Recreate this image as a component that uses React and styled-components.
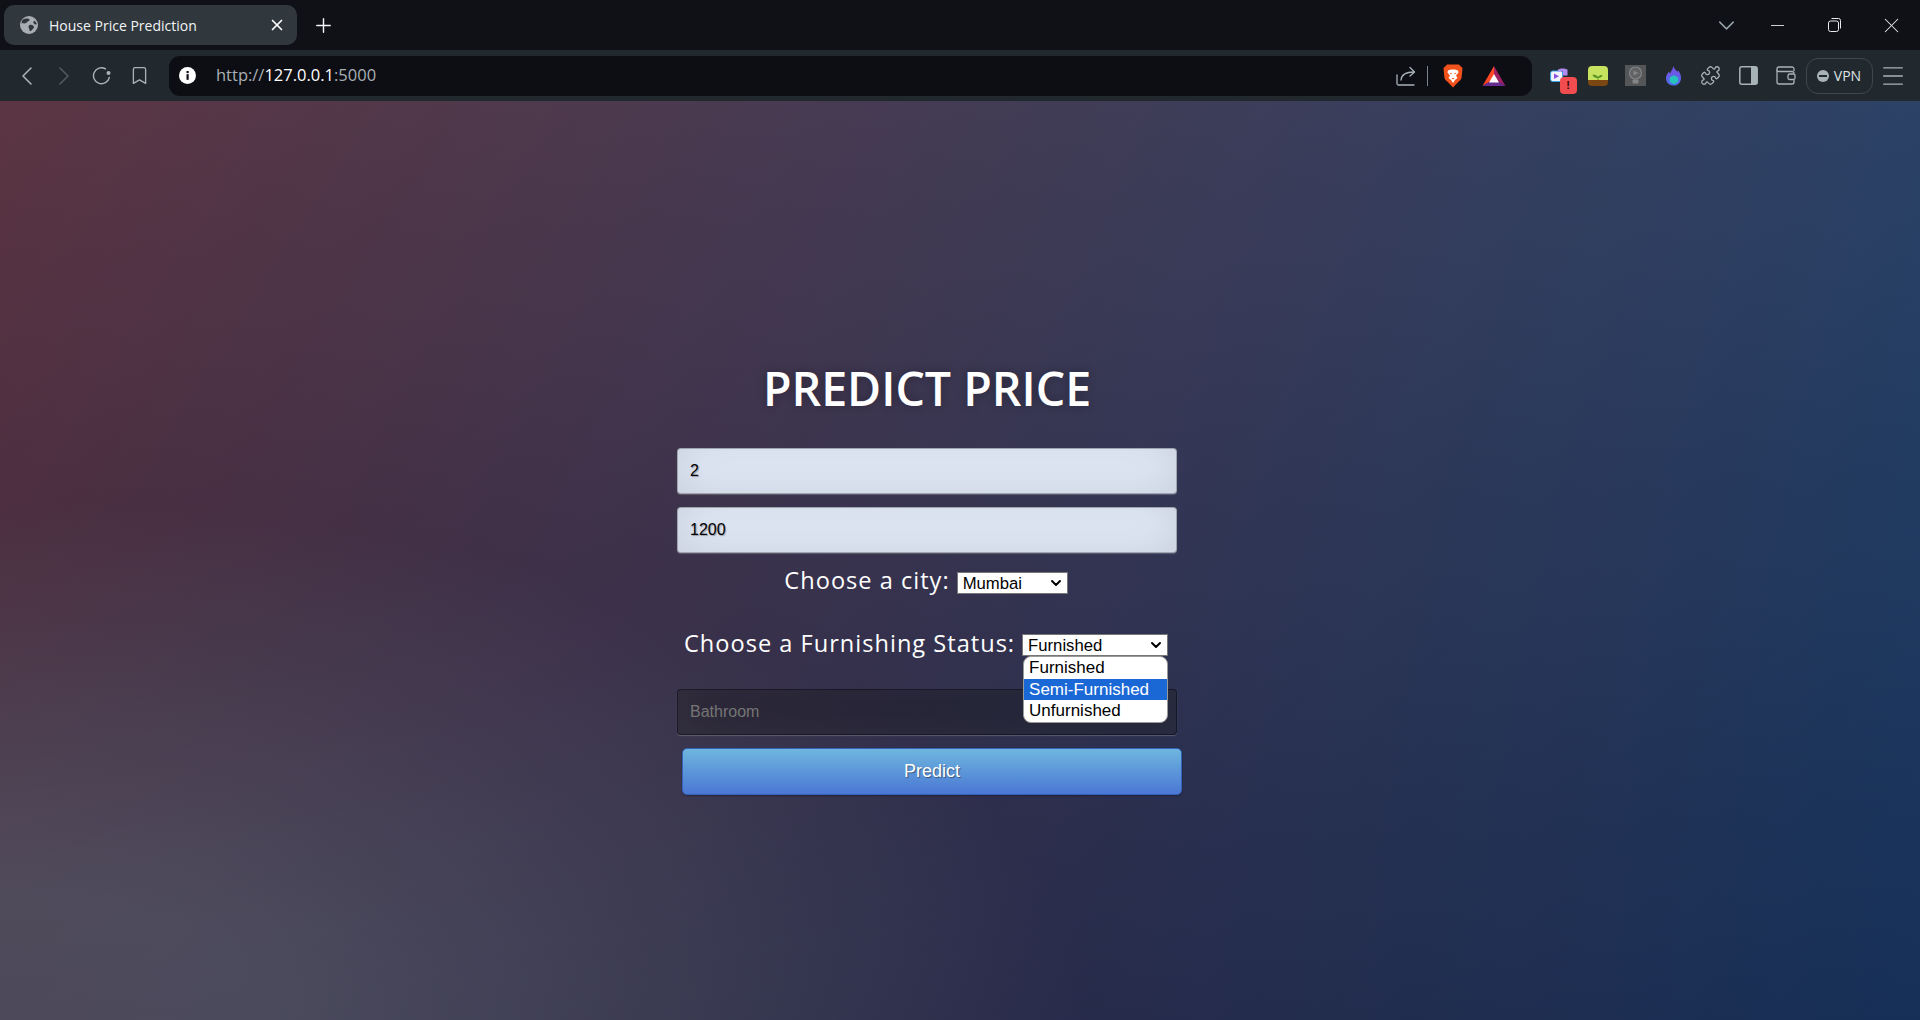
import React from 'react';
import styled, { createGlobalStyle } from 'styled-components';
import { ChevronLeft, ChevronRight, ChevronDown, Bookmark, Plus, X, Minus, Puzzle, Menu } from 'lucide-react';

const Global = createGlobalStyle`
  html, body { margin: 0; height: 100%; }
  #root { height: 100%; }
  * { box-sizing: border-box; }
`;

const Shell = styled.div`
  display: flex;
  flex-direction: column;
  height: 1020px;
  overflow: hidden;
  font-family: "Open Sans", sans-serif;
`;

const TabStrip = styled.div`
  height: 50px;
  flex: none;
  display: flex;
  align-items: flex-start;
  padding: 5px 0 0 4px;
  background: #0f1116;
  color: #fff;
`;

const Tab = styled.div`
  width: 293px;
  height: 40px;
  flex: none;
  display: flex;
  align-items: center;
  padding: 0 11px 0 16px;
  border-radius: 10px;
  background: #30383e;
  font-size: 14px;
`;

const TabTitle = styled.span`
  flex: 1;
  margin-left: 11px;
  color: #f2f4f5;
  white-space: nowrap;
`;

const NewTab = styled.div`
  width: 32px;
  height: 40px;
  margin-left: 10px;
  display: flex;
  align-items: center;
  justify-content: center;
`;

const WindowControls = styled.div`
  margin-left: auto;
  height: 40px;
  display: flex;
  align-items: center;
`;

const WindowButton = styled.div`
  width: ${p => p.$w || 57}px;
  display: flex;
  justify-content: center;
  color: ${p => p.$dim ? '#98a3ab' : '#e8eaec'};
`;

const Toolbar = styled.div`
  height: 51px;
  flex: none;
  display: flex;
  align-items: center;
  padding: 0 9px 0 8px;
  background: #22292e;
`;

const ToolButton = styled.div`
  width: ${p => p.$w || 37.5}px;
  height: 36px;
  flex: none;
  display: flex;
  align-items: center;
  justify-content: center;
  position: relative;
  color: ${p => p.$off ? '#525a60' : '#a8b2b9'};
`;

const AddressBar = styled.div`
  width: 1363px;
  height: 40px;
  flex: none;
  margin: 0 10px 0 11px;
  display: flex;
  align-items: center;
  padding: 0 7px 0 10px;
  border-radius: 11px;
  background: #0d0e13;
`;

const Url = styled.div`
  margin: -2px 0 0 20px;
  font-size: 16.5px;
  color: #a9b0b6;
  b { font-weight: 400; color: #fff; }
`;

const AddressIcons = styled.div`
  margin-left: auto;
  display: flex;
  align-items: center;
  color: #a8b2b9;
`;

const Divider = styled.div`
  width: 1px;
  height: 20px;
  margin: 0 15px 0 11px;
  background: #7a848b;
`;

const VpnPill = styled.div`
  width: 67px;
  height: 36px;
  flex: none;
  margin: 0 2px 0 1px;
  display: flex;
  align-items: center;
  justify-content: center;
  gap: 5px;
  border: 1px solid #3e474d;
  border-radius: 12px;
  color: #dfe3e6;
  font-size: 14px;
`;

const VpnDot = styled.span`
  width: 12px;
  height: 12px;
  border-radius: 50%;
  background: #a8b2b9;
  display: flex;
  align-items: center;
  justify-content: center;
  &::after { content: ''; width: 8px; height: 2px; background: #22292e; }
`;

const Badge = styled.span`
  position: absolute;
  right: 3px;
  bottom: 0;
  width: 17px;
  height: 17px;
  border-radius: 4px;
  background: #f14c50;
  color: #30090a;
  font: 700 11px/17px "Liberation Sans", sans-serif;
  text-align: center;
`;

const Page = styled.main`
  flex: 1;
  padding: 258px 0 0 677px;
  background:
    radial-gradient(ellipse farthest-corner at 0% 100%, rgba(104,128,138,.4) 10%, rgba(138,114,76,0) 40%),
    linear-gradient(to bottom, rgba(57,173,219,.25) 0%, rgba(42,60,87,.4) 100%),
    linear-gradient(135deg, #670d10 0%, #092756 100%);
`;

const Form = styled.form`
  width: 500px;
  display: flex;
  flex-direction: column;
  align-items: stretch;
`;

const Title = styled.h1`
  margin: 0 0 31px;
  color: #fff;
  font-size: 46.5px;
  line-height: 58px;
  font-weight: 600;
  text-align: center;
  text-shadow: 0 0 10px rgba(0,0,0,.3);
`;

const Field = styled.input`
  width: 500px;
  height: 46px;
  margin-bottom: ${p => p.$mb || 13}px;
  padding: 10px 12px;
  border: 1px solid rgba(0,0,0,.3);
  border-radius: 4px;
  outline: none;
  background: ${p => p.$filled ? '#e4ecfb' : 'rgba(0,0,0,.3)'};
  box-shadow: inset 0 -5px 45px rgba(100,100,100,.2), 0 1px 1px rgba(255,255,255,.2);
  color: #000;
  font: 16px "Liberation Sans", Arial, sans-serif;
  text-shadow: 1px 1px 1px rgba(0,0,0,.3);
  &::placeholder { color: #757575; text-shadow: none; }
`;

const ChoiceRow = styled.div`
  height: ${p => p.$h}px;
  padding-right: 2px;
  display: flex;
  justify-content: center;
  align-items: flex-start;
  gap: 7px;
  color: #fff;
  font-size: 23.6px;
  line-height: 28px;
  letter-spacing: 1px;
`;

const Picker = styled.div`
  position: relative;
  width: ${p => p.$w}px;
  margin-top: ${p => p.$top || 6}px;
`;

const NativeSelect = styled.select`
  display: block;
  width: 100%;
  height: 22px;
  padding: 0 0 0 5px;
  appearance: none;
  border: 1px solid #767676;
  border-radius: 0;
  background: #fff;
  color: #000;
  font: 16.7px "Liberation Sans", Arial, sans-serif;
`;

const SelectArrow = styled.span`
  position: absolute;
  top: 3px;
  right: 4px;
  display: flex;
  color: #000;
  pointer-events: none;
`;

const OptionList = styled.ul`
  position: absolute;
  top: 22px;
  left: 1px;
  right: 0;
  margin: 0;
  padding: 0;
  list-style: none;
  overflow: hidden;
  background: #fff;
  border: 1px solid #9a9a9a;
  border-radius: 8px;
  color: #000;
  font: 17px/21.5px "Liberation Sans", Arial, sans-serif;
  letter-spacing: 0;
`;

const OptionItem = styled.li`
  padding: 0 5px;
  background: ${p => p.$active ? '#1a68d6' : 'transparent'};
  color: ${p => p.$active ? '#fff' : '#000'};
`;

const PredictButton = styled.button`
  width: 500px;
  height: 47px;
  margin-left: 5px;
  border: 1px solid #3762bc;
  border-radius: 5px;
  background: linear-gradient(to bottom, #6eb6de, #4a77d4);
  box-shadow: 0 1px 2px rgba(0,0,0,.3);
  color: #fff;
  font: 18px "Liberation Sans", Arial, sans-serif;
  text-shadow: 1px 1px 1px rgba(0,0,0,.4);
`;

const Globe = () => (
  <svg width="18" height="18" viewBox="0 0 18 18">
    <circle cx="9" cy="9" r="9" fill="#a7adb2" />
    <path d="M3 3.500c2-1 4-1.200 6-.5 1 .8.500 2-.8 2.300C7 5.700 7 7 5.500 7.300 4 7.600 2.500 7 1.500 7.500 1.500 6 2 4.500 3 3.500zM9.500 9c1.500-.5 3 0 4 1 1 .8.500 2-.5 2.800-1 1-1.500 2.200-2.800 2.500-1-.5-.7-2-1.200-3-.6-1-.9-2.600.5-3.300zM14 4.500l2 1.800.8 2-2 .3-1.500-1.800z" fill="#30383e" />
  </svg>
);

const InfoDot = () => (
  <svg width="17" height="17" viewBox="0 0 17 17">
    <circle cx="8.500" cy="8.500" r="8.500" fill="#fff" />
    <rect x="7.500" y="7.200" width="2.200" height="5.600" fill="#0d0e13" />
    <rect x="7.500" y="4" width="2.200" height="2.100" fill="#0d0e13" />
  </svg>
);

const ReloadIcon = () => (
  <svg width="20" height="18" viewBox="0 0 20 18" fill="none">
    <path d="M13.500 1.800A8 8 0 1 0 17.300 10.500" stroke="currentColor" strokeWidth="1.400" strokeLinecap="round" />
    <circle cx="16.500" cy="6" r="2" fill="currentColor" />
  </svg>
);

const RestoreIcon = () => (
  <svg width="13" height="14" viewBox="0 0 13 14" fill="none" stroke="currentColor" strokeWidth="1">
    <rect x=".5" y="3" width="10" height="10.500" rx="2" />
    <path d="M3.500 .5h7a2 2 0 0 1 2 2v8" />
  </svg>
);

const ShareIcon = () => (
  <svg width="20" height="20" viewBox="0 0 20 20" fill="none" stroke="currentColor" strokeWidth="1.300" strokeLinecap="round" strokeLinejoin="round">
    <path d="M1 9v8.500c0 1 .6 1.500 1.500 1.500H18" />
    <path d="M5 14c.5-5 4-8 13-8" />
    <path d="M14 1.500 18.500 6 14 10" />
  </svg>
);

const LionIcon = () => (
  <svg width="20" height="24" viewBox="0 0 20 24">
    <path d="M4 .5h12l2 2.300 1.500 1-.8 9.200c-.3 2-1.500 3.500-3 4.600L10 23.500 4.300 17.600c-1.500-1.100-2.700-2.600-3-4.600L.5 3.800 2 2.800z" fill="#f1511b" />
    <path d="M5 6.500 8 5.500h4l3 1 .5 2-2.500 3 1.500 2.500-2.500 2-1.500 2.500h-1L8 16l-2.500-2L7 11.500l-2.500-3z" fill="#fff" />
    <path d="M6.500 8.500 9 9.500l-1 1zM13.500 8.500 11 9.500l1 1zM8.500 14h3L10 15.500z" fill="#f1511b" />
  </svg>
);

const BatIcon = () => (
  <svg width="24" height="22" viewBox="0 0 24 22">
    <path d="M12 1 23.500 21 12 14z" fill="#9e1f63" />
    <path d="M12 1 .5 21 12 14z" fill="#ff4724" />
    <path d="M.5 21h23L12 14z" fill="#662d91" />
    <path d="M12 9 17 17.500H7z" fill="#fff" />
  </svg>
);

const MediaExtension = () => (
  <svg width="18" height="16" viewBox="0 0 18 16" style={{ marginRight: 3 }}>
    <rect x=".6" y="3" width="12" height="10.500" rx="2" fill="#f3f3fb" stroke="#35a6ea" />
    <path d="M4 5.500l5 2.700L4 11z" fill="#8a53e0" />
    <path d="M8 1.500C10 0 15 0 17.500 1.500v6h-4.500V3.500H8z" fill="#b18cf0" />
  </svg>
);

const SproutExtension = () => (
  <svg width="20" height="20" viewBox="0 0 20 20">
    <path d="M4 0h12a4 4 0 0 1 4 4v10H0V4a4 4 0 0 1 4-4z" fill="#c6e25f" />
    <path d="M0 14h20v2a4 4 0 0 1-4 4H4a4 4 0 0 1-4-4z" fill="#7a4712" />
    <path d="M10 14v-3.500M10 11.500C9 9.800 7 9 5 9c0 1.700 2 2.500 5 2.500zM10 11.500c1-1.700 3-2 4-2 0 1.300-2 2-4 2z" stroke="#4f8a1f" strokeWidth=".8" fill="#5d9a23" />
  </svg>
);

const BulbExtension = () => (
  <svg width="21" height="21" viewBox="0 0 21 21">
    <rect width="21" height="21" fill="#545658" />
    <circle cx="10.500" cy="8" r="6" fill="#606264" stroke="#838587" strokeWidth="1.200" />
    <path d="M8.500 5.500 13.500 8l-5 2.500z" fill="#838587" />
    <rect x="7.500" y="14.500" width="6" height="4" rx="1" fill="#838587" />
  </svg>
);

const FlameExtension = () => (
  <svg width="17" height="20" viewBox="0 0 18 24">
    <defs>
      <linearGradient id="flameFill" x1="0" y1="0" x2="0" y2="1">
        <stop offset="0" stopColor="#7a4fe0" />
        <stop offset="1" stopColor="#4f6cf0" />
      </linearGradient>
    </defs>
    <path d="M9 0c1 4 3 5 5 7l.5-2C17 8 18 11 18 14c0 6-4 9.500-9 9.500S0 20 0 14.500c0-3.500 2-5.500 3.500-7.500L5 9C6 6 8 4 9 0z" fill="url(#flameFill)" />
    <path d="M9.500 11l5 2.700v5.600l-5 2.700-5-2.700v-5.600z" fill="#26c3bd" />
  </svg>
);

const SidebarIcon = () => (
  <svg width="19" height="19" viewBox="0 0 19 19">
    <rect x=".8" y=".8" width="17.400" height="17.400" rx="2" fill="none" stroke="#a8b2b9" strokeWidth="1.500" />
    <rect x="12" y="1" width="6" height="17" fill="#a8b2b9" />
  </svg>
);

const WalletIcon = () => (
  <svg width="20" height="19" viewBox="0 0 20 19" fill="none" stroke="#a8b2b9" strokeWidth="1.300">
    <path d="M18 5V3a2 2 0 0 0-2-2H3a2 2 0 0 0-2 2v13a2 2 0 0 0 2 2h13a2 2 0 0 0 2-2v-2" />
    <path d="M1 4c0 1 1 1.500 2 1.500h13a2 2 0 0 1 2 2" />
    <rect x="12" y="8" width="7" height="5.500" rx="1.500" />
  </svg>
);

export default function App() {
  return (
    <Shell>
      <Global />
      <TabStrip>
        <Tab>
          <Globe />
          <TabTitle>House Price Prediction</TabTitle>
          <X size={18} strokeWidth={2.200} color="#fff" />
        </Tab>
        <NewTab><Plus size={23} strokeWidth={1.500} color="#f2f4f5" /></NewTab>
        <WindowControls>
          <WindowButton $w={46} $dim><ChevronDown size={27} strokeWidth={1.300} /></WindowButton>
          <WindowButton><Minus size={21} strokeWidth={1} /></WindowButton>
          <WindowButton><RestoreIcon /></WindowButton>
          <WindowButton><X size={25} strokeWidth={1} /></WindowButton>
        </WindowControls>
      </TabStrip>

      <Toolbar>
        <ToolButton><ChevronLeft size={32} strokeWidth={1.200} /></ToolButton>
        <ToolButton $off><ChevronRight size={32} strokeWidth={1.200} /></ToolButton>
        <ToolButton><ReloadIcon /></ToolButton>
        <ToolButton><Bookmark size={21} strokeWidth={1.500} /></ToolButton>
        <AddressBar>
          <InfoDot />
          <Url>http://<b>127.0.0.1</b>:5000</Url>
          <AddressIcons>
            <ShareIcon />
            <Divider />
            <LionIcon />
            <ToolButton $w={62}><BatIcon /></ToolButton>
          </AddressIcons>
        </AddressBar>
        <ToolButton><MediaExtension /><Badge>!</Badge></ToolButton>
        <ToolButton><SproutExtension /></ToolButton>
        <ToolButton><BulbExtension /></ToolButton>
        <ToolButton><FlameExtension /></ToolButton>
        <ToolButton><Puzzle size={21} strokeWidth={1.500} /></ToolButton>
        <ToolButton><SidebarIcon /></ToolButton>
        <ToolButton><WalletIcon /></ToolButton>
        <VpnPill><VpnDot />VPN</VpnPill>
        <ToolButton><Menu size={28} strokeWidth={1.100} /></ToolButton>
      </Toolbar>

      <Page>
        <Form onSubmit={e => e.preventDefault()}>
          <Title>PREDICT PRICE</Title>
          <Field $filled defaultValue="2" />
          <Field $filled defaultValue="1200" $mb={13} />
          <ChoiceRow $h={63}>
            Choose a city:
            <Picker $w={111}>
              <NativeSelect defaultValue="Mumbai">
                <option>Mumbai</option>
              </NativeSelect>
              <SelectArrow><ChevronDown size={16} strokeWidth={3} /></SelectArrow>
            </Picker>
          </ChoiceRow>
          <ChoiceRow $h={60}>
            Choose a Furnishing Status:
            <Picker $w={146} $top={5}>
              <NativeSelect defaultValue="Furnished">
                <option>Furnished</option>
              </NativeSelect>
              <SelectArrow><ChevronDown size={16} strokeWidth={3} /></SelectArrow>
              <OptionList>
                <OptionItem>Furnished</OptionItem>
                <OptionItem $active>Semi-Furnished</OptionItem>
                <OptionItem>Unfurnished</OptionItem>
              </OptionList>
            </Picker>
          </ChoiceRow>
          <Field placeholder="Bathroom" $mb={13} />
          <PredictButton type="button">Predict</PredictButton>
        </Form>
      </Page>
    </Shell>
  );
}
